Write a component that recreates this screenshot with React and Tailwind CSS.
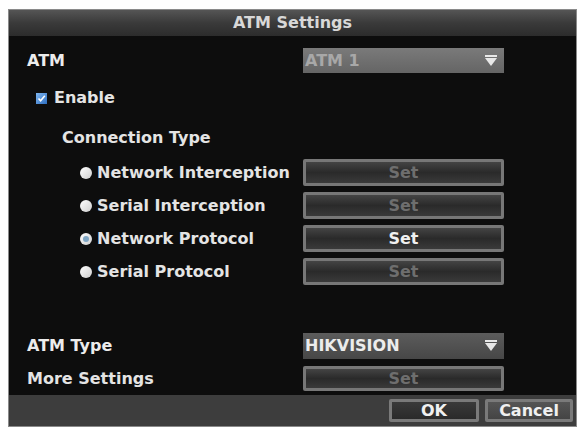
import React from 'react';

const font = { fontFamily: '"DejaVu Sans", "Liberation Sans", sans-serif' };

function Triangle() {
  return (
    <svg width="14" height="12" viewBox="0 0 14 12" className="shrink-0">
      <rect x="1" y="0" width="12" height="2" fill="#e8e8e8" />
      <polygon points="1,3 13,3 7,11" fill="#e8e8e8" />
    </svg>
  );
}

function Dropdown({ value, disabled }) {
  return (
    <div
      className={`w-[201px] h-full flex items-center justify-between pl-[2px] pr-[6px] ${
        disabled
          ? 'bg-gradient-to-b from-[#7a7a7a] to-[#656565] text-[#a8a8a8]'
          : 'bg-gradient-to-b from-[#5c5c5c] to-[#474747] text-[#ececec]'
      }`}
    >
      <span className="text-[16px] font-bold leading-none">{value}</span>
      <Triangle />
    </div>
  );
}

function SetButton({ active }) {
  return (
    <div className="w-[201px] h-full rounded-[2px] bg-[#777] p-[3px]">
      <div className="h-full bg-gradient-to-b from-[#444] via-[#2a2a2a] to-[#3a3a3a] flex items-center justify-center">
        <span
          className={`text-[16px] font-bold leading-none ${
            active ? 'text-[#f0f0f0]' : 'text-[#6e6e6e]'
          }`}
        >
          Set
        </span>
      </div>
    </div>
  );
}

function Radio({ checked }) {
  return (
    <div className="w-[12px] h-[12px] rounded-full bg-gradient-to-br from-white to-[#cfcfcf] flex items-center justify-center shrink-0">
      {checked && <div className="w-[6px] h-[6px] rounded-full bg-[#7fa6c4]" />}
    </div>
  );
}

function RadioRow({ label, checked, active }) {
  return (
    <div className="h-[27px] flex items-center">
      <div className="w-[276px] flex items-center gap-[5px] pl-[53px]">
        <Radio checked={checked} />
        <span className="text-[16px] font-bold leading-none text-[#e4e4e4] whitespace-nowrap">
          {label}
        </span>
      </div>
      <SetButton active={active} />
    </div>
  );
}

export default function App() {
  return (
    <div className="w-[581px] h-[431px] bg-white pt-[9px] pl-[8px]" style={font}>
      <div className="w-[569px] h-[418px] flex flex-col border border-[#8a8a8a] bg-[#0d0d0d]">
        {/* title bar */}
        <div className="h-[26px] bg-gradient-to-b from-[#555] via-[#3a3a3a] to-[#2c2c2c] flex items-center justify-center">
          <span className="text-[16px] font-bold text-[#d8d8d8] leading-none">ATM Settings</span>
        </div>

        {/* body */}
        <div className="flex-1 flex flex-col pl-[18px]">
          <div className="mt-[12px] h-[25px] flex items-center">
            <span className="w-[276px] text-[16px] font-bold text-[#ececec] leading-none">ATM</span>
            <Dropdown value="ATM 1" disabled />
          </div>

          <div className="mt-[13px] h-[24px] flex items-center gap-[7px] pl-[9px]">
            <div className="w-[11px] h-[11px] bg-gradient-to-br from-[#7fb6f0] to-[#2e6fc0] flex items-center justify-center">
              <svg width="9" height="9" viewBox="0 0 9 9">
                <path d="M1.5 4.5 L3.6 6.8 L7.8 1.8" stroke="#fff" strokeWidth="1.6" fill="none" />
              </svg>
            </div>
            <span className="text-[16px] font-bold text-[#e4e4e4] leading-none">Enable</span>
          </div>

          <div className="mt-[16px] h-[24px] flex items-center pl-[35px]">
            <span className="text-[16px] font-bold text-[#e4e4e4] leading-none">Connection Type</span>
          </div>

          <div className="mt-[9px] flex flex-col gap-[6px]">
            <RadioRow label="Network Interception" />
            <RadioRow label="Serial Interception" />
            <RadioRow label="Network Protocol" checked active />
            <RadioRow label="Serial Protocol" />
          </div>

          <div className="mt-[48px] h-[26px] flex items-center">
            <span className="w-[276px] text-[16px] font-bold text-[#ececec] leading-none">ATM Type</span>
            <Dropdown value="HIKVISION" />
          </div>

          <div className="mt-[7px] h-[25px] flex items-center">
            <span className="w-[276px] text-[16px] font-bold text-[#e4e4e4] leading-none">More Settings</span>
            <SetButton />
          </div>
        </div>

        {/* footer */}
        <div className="h-[31px] bg-[#3d3d3d] flex items-center justify-end gap-[6px] pr-[3px]">
          <div className="w-[90px] h-[23px] rounded-[2px] bg-[#7a7a7a] p-[3px]">
            <div className="h-full bg-gradient-to-b from-[#3a3a3a] to-[#2a2a2a] flex items-center justify-center">
              <span className="text-[16px] font-bold text-[#f0f0f0] leading-none">OK</span>
            </div>
          </div>
          <div className="w-[88px] h-[23px] rounded-[2px] bg-[#7a7a7a] p-[3px]">
            <div className="h-full bg-gradient-to-b from-[#555] to-[#444] flex items-center justify-center">
              <span className="text-[16px] font-bold text-[#f0f0f0] leading-none">Cancel</span>
            </div>
          </div>
        </div>
      </div>
    </div>
  );
}
